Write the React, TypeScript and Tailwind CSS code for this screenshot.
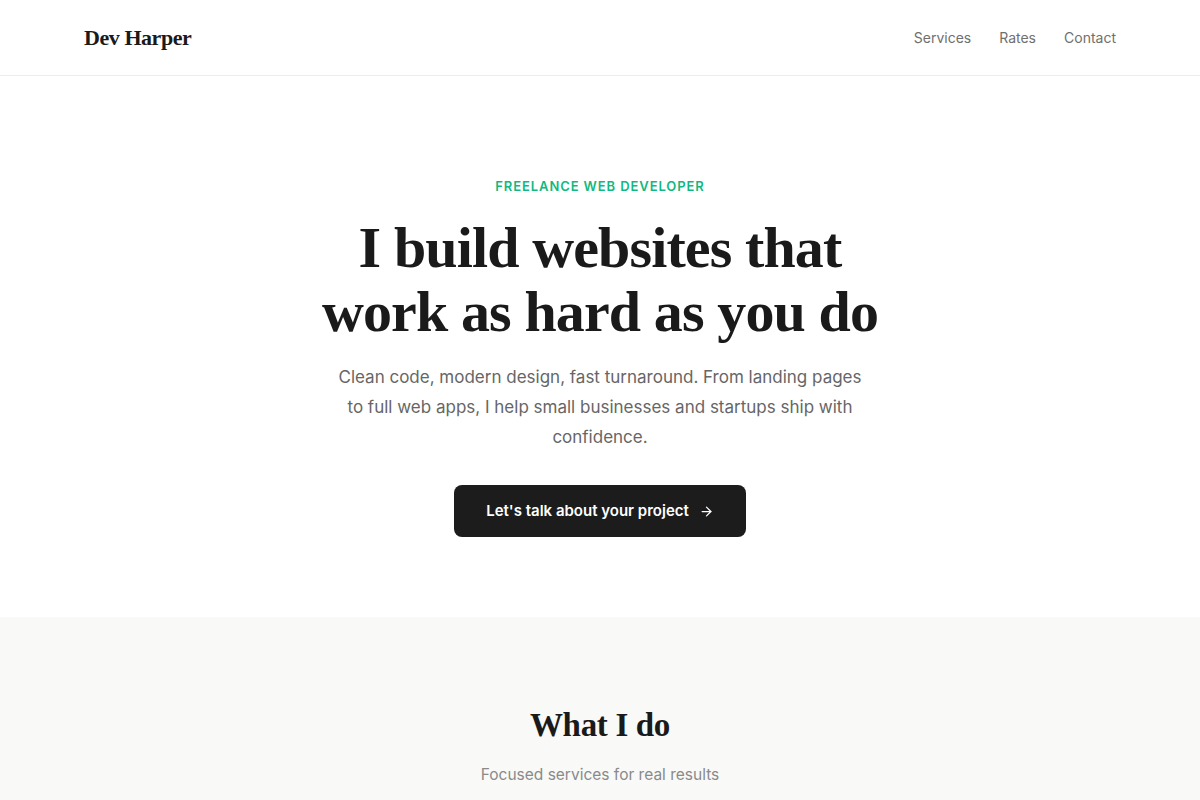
import { ArrowRight } from "lucide-react";

const serif = "font-['Liberation_Serif','DejaVu_Serif',serif]";
const sans = "font-['Inter','Roboto',sans-serif]";

function Nav() {
  return (
    <header className="border-b border-[#ececec] bg-white">
      <div className="mx-auto flex h-[75px] max-w-[1080px] items-center justify-between px-6">
        <a href="#" className={`${serif} text-[22px] font-bold tracking-[-0.02em] text-[#1a1a1a]`}>
          Dev Harper
        </a>
        <nav className={`${sans} flex items-center gap-7 text-[14px] leading-5 text-[#6f6f6f]`}>
          <a href="#services">Services</a>
          <a href="#rates">Rates</a>
          <a href="#contact">Contact</a>
        </nav>
      </div>
    </header>
  );
}

function Hero() {
  return (
    <section className="bg-white pb-[80px] pt-[100px]">
      <div className="mx-auto flex max-w-[1080px] flex-col items-center px-6 text-center">
        <p className={`${sans} text-[13px] font-semibold uppercase leading-5 tracking-[0.07em] text-[#10b981]`}>
          Freelance web developer
        </p>
        <h1 className={`${serif} mt-5 text-[58px] font-bold leading-[64px] tracking-[-0.015em] text-[#1a1a1a]`}>
          I build websites that
          <br />
          work as hard as you do
        </h1>
        <p className={`${sans} mt-[18px] max-w-[530px] text-[17px] leading-[30px] text-[#666666]`}>
          Clean code, modern design, fast turnaround. From landing pages to full web apps, I help small
          businesses and startups ship with confidence.
        </p>
        <a
          href="#contact"
          className={`${sans} mt-[33px] inline-flex items-center gap-2.5 rounded-lg bg-[#1c1c1c] px-8 py-4 text-[15px] font-semibold leading-5 text-white`}
        >
          Let's talk about your project
          <ArrowRight size={15} strokeWidth={2} />
        </a>
      </div>
    </section>
  );
}

function Services() {
  return (
    <section id="services" className="bg-[#f9f9f7] pb-20 pt-[86px]">
      <div className="mx-auto max-w-[1080px] px-6 text-center">
        <h2 className={`${serif} text-[33px] font-bold leading-[44px] tracking-[-0.01em] text-[#1a1a1a]`}>
          What I do
        </h2>
        <p className={`${sans} mt-4 text-[15.5px] leading-6 text-[#8a8a8a]`}>Focused services for real results</p>
      </div>
    </section>
  );
}

export default function App() {
  return (
    <div className="min-h-screen bg-white">
      <Nav />
      <Hero />
      <Services />
    </div>
  );
}
